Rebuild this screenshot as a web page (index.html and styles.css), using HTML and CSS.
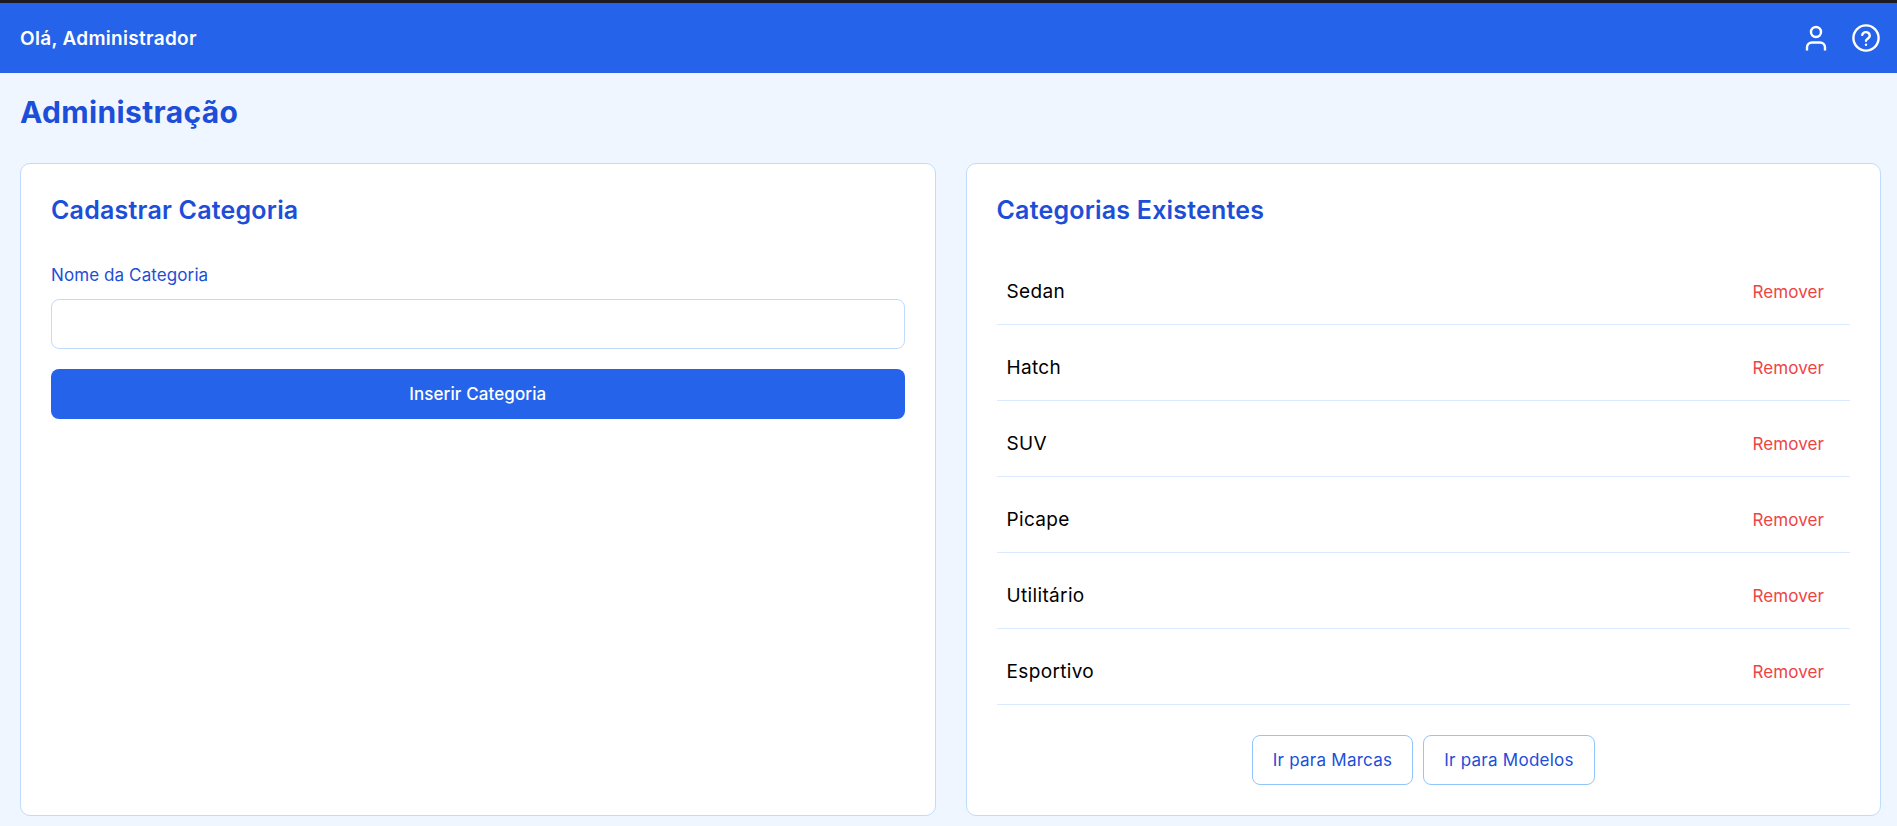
FILE: index.html
```html
<!DOCTYPE html>
<html lang="pt-BR">

<head>
    <title>Administração</title>
    <link rel="stylesheet" href="styles.css">
</head>

<body>
    <header class="topbar">
        <span class="greeting">Olá, Administrador</span>
        <div class="topbar-icons">
            <svg class="icon" viewBox="0 0 28 28" fill="none" stroke="#fff" stroke-width="2.4">
                <circle cx="14" cy="8" r="5"/>
                <path d="M5 26.500v-3c0-3 2.200-5 5-5h8c2.800 0 5 2 5 5v3"/>
            </svg>
            <svg class="icon" viewBox="0 0 28 28" fill="none" stroke="#fff" stroke-width="2.4" stroke-linecap="round">
                <circle cx="14" cy="14" r="12.600"/>
                <path d="M10.200 10.800a3.900 3.900 0 0 1 7.600 1c0 2.600-3.800 3-3.800 5"/>
                <path d="M14 20.600v.2"/>
            </svg>
        </div>
    </header>

    <main class="content">
        <h1>Administração</h1>
        <div class="columns">
            <section class="card">
                <h2>Cadastrar Categoria</h2>
                <form class="category-form">
                    <label for="category-name">Nome da Categoria</label>
                    <input type="text" id="category-name">
                    <button type="button" class="submit-button">Inserir Categoria</button>
                </form>
            </section>

            <section class="card">
                <h2>Categorias Existentes</h2>
                <ul class="category-list">
                    <li><span>Sedan</span><button type="button" class="remove-button">Remover</button></li>
                    <li><span>Hatch</span><button type="button" class="remove-button">Remover</button></li>
                    <li><span>SUV</span><button type="button" class="remove-button">Remover</button></li>
                    <li><span>Picape</span><button type="button" class="remove-button">Remover</button></li>
                    <li><span>Utilitário</span><button type="button" class="remove-button">Remover</button></li>
                    <li><span>Esportivo</span><button type="button" class="remove-button">Remover</button></li>
                </ul>
                <div class="nav-buttons">
                    <a href="#" class="nav-button">Ir para Marcas</a>
                    <a href="#" class="nav-button">Ir para Modelos</a>
                </div>
            </section>
        </div>
    </main>
</body>

</html>
```

FILE: styles.css
```css
* {
    box-sizing: border-box;
}

body {
    margin: 0;
    background-color: #eff6ff;
    color: #000;
    font-family: 'Inter', sans-serif;
    font-size: 18px;
}

.topbar {
    height: 73px;
    border-top: 3px solid #1c1c20;
    padding: 0 17px 0 20px;
    background-color: #2563eb;
    color: #fff;
    display: flex;
    align-items: center;
    justify-content: space-between;
}

.greeting {
    font-size: 19px;
    letter-spacing: 0.3px;
    font-weight: 600;
}

.topbar-icons {
    display: flex;
    align-items: center;
    gap: 22px;
}

.icon {
    width: 28px;
    height: 28px;
    display: block;
}

.content {
    padding: 21px 16px 10px 20px;
}

h1 {
    margin: 0 0 32px;
    font-size: 30px;
    line-height: 37px;
    font-weight: 700;
    letter-spacing: 0.35px;
    color: #1d4ed8;
}

.columns {
    display: grid;
    grid-template-columns: 1fr 1fr;
    gap: 30px;
}

.card {
    height: 653px;
    padding: 30px;
    background-color: #fff;
    border: 1px solid #bfdbfe;
    border-radius: 10px;
}

h2 {
    margin: 0 0 22px;
    font-size: 25px;
    line-height: 33px;
    letter-spacing: 0.2px;
    font-weight: 600;
    color: #1d4ed8;
}

.category-form {
    padding-top: 16px;
    display: flex;
    flex-direction: column;
}

label {
    font-size: 17px;
    line-height: 20px;
    letter-spacing: 0.1px;
    color: #1d4ed8;
    margin-bottom: 14px;
}

input[type="text"] {
    height: 50px;
    border: 1px solid #bfdbfe;
    border-radius: 8px;
    background-color: #fff;
    margin-bottom: 20px;
}

.submit-button {
    height: 50px;
    border: none;
    border-radius: 8px;
    background-color: #2563eb;
    color: #fff;
    font-family: inherit;
    font-size: 17px;
    letter-spacing: 0.1px;
    font-weight: 500;
}

.category-list {
    list-style: none;
    margin: 0;
    padding: 0;
}

.category-list li {
    height: 76px;
    padding: 10px 0 0 10px;
    border-bottom: 1px solid #dbeafe;
    font-size: 19px;
    letter-spacing: 0.35px;
    display: flex;
    align-items: center;
    justify-content: space-between;
}

.remove-button {
    padding: 8px 26px 8px 16px;
    border: none;
    background: none;
    color: #ef4444;
    font-family: inherit;
    font-size: 17px;
    letter-spacing: 0.1px;
}

.nav-buttons {
    margin-top: 30px;
    display: flex;
    justify-content: center;
    gap: 10px;
}

.nav-button {
    height: 50px;
    padding: 0 20px;
    border: 1px solid #93c5fd;
    border-radius: 8px;
    color: #1d4ed8;
    font-size: 17px;
    letter-spacing: 0.25px;
    text-decoration: none;
    display: flex;
    align-items: center;
}
```
